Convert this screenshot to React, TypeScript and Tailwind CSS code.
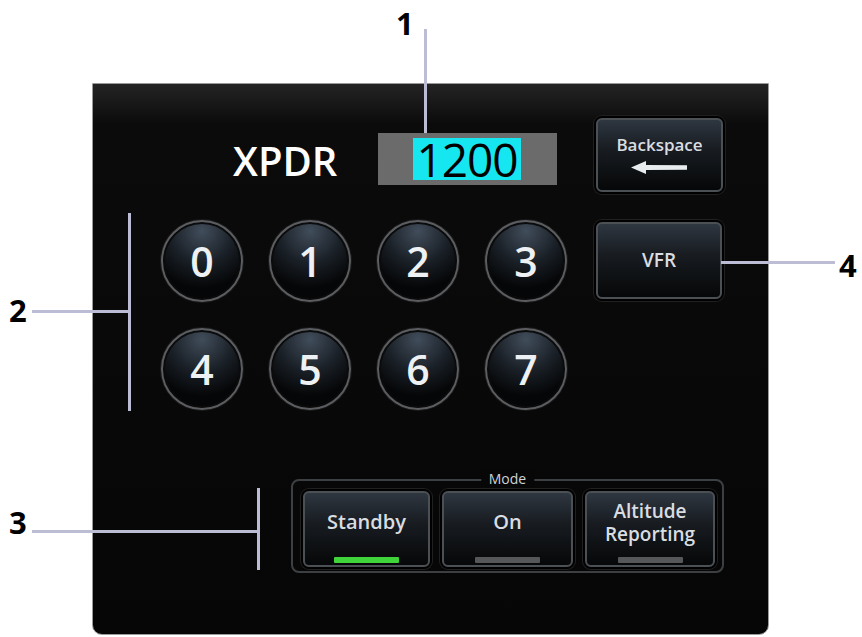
import React from "react";

const font = { fontFamily: '"Open Sans", "Noto Sans", sans-serif' };

function Key({ d }: { d: string }) {
  return (
    <div className="flex h-[82px] w-[82px] items-center justify-center rounded-full border-2 border-[#5b5d60] bg-[radial-gradient(circle_at_50%_12%,#414d5b_0%,#1a2027_40%,#050607_72%)] shadow-[inset_0_0_0_2px_#0b0b0b,0_0_0_1px_#1a1a1a]">
      <span className="text-[41px] font-semibold leading-none text-[#eef1f3]">{d}</span>
    </div>
  );
}

const btn =
  "flex flex-col items-center rounded-[6px] border-2 border-[#4b5055] bg-[linear-gradient(to_bottom,#2e3640_0%,#181c21_42%,#060708_100%)] shadow-[0_0_0_2px_#000,0_0_0_3px_#202020] text-[#d9dde1]";

export default function App() {
  return (
    <div className="relative h-[637px] w-[862px] overflow-hidden bg-white pl-[92px] pt-[83px]" style={font}>
      {/* panel */}
      <div className="flex h-[552px] w-[677px] flex-col rounded-b-[10px] border border-[#9a9a9a] bg-[linear-gradient(to_bottom,#242424_0px,#0b0b0b_40px,#060606_100%)]">
        {/* top row */}
        <div className="mt-[34px] flex h-[74px] items-start">
          <div className="ml-[140px] mt-[15px] flex h-[52px] w-[145px] items-center pt-[4px]">
            <span className="text-[40px] font-semibold leading-none text-white">XPDR</span>
          </div>
          <div className="mt-[15px] flex h-[52px] w-[179px] items-center bg-[#6b6b6b] pl-[35px]">
            <div className="flex h-[42px] w-[108px] items-center justify-center bg-[#16e6f0]">
              <span className="text-[46px] font-medium leading-none tracking-[-1px] text-black">1200</span>
            </div>
          </div>
          <div className={`${btn} ml-[39px] h-[74px] w-[127px] pt-[16px]`}>
            <span className="text-[17px] font-semibold leading-none">Backspace</span>
            <svg className="mt-[8px]" width="58" height="13" viewBox="0 0 58 13">
              <polygon points="0,6.5 15,0 15,4 56,4.3 56,8.7 15,9 15,13" fill="#e8ecef" />
            </svg>
          </div>
        </div>

        {/* keypad row */}
        <div className="mt-[28px] flex items-start">
          <div className="ml-[68px] grid grid-cols-4 gap-[26px]">
            {["0", "1", "2", "3", "4", "5", "6", "7"].map((d) => (
              <Key key={d} d={d} />
            ))}
          </div>
          <div className={`${btn} ml-[29px] mt-[2px] h-[77px] w-[126px] justify-center`}>
            <span className="text-[19px] font-semibold leading-none">VFR</span>
          </div>
        </div>

        {/* mode group */}
        <div className="relative ml-[198px] mt-[69px] flex h-[94px] w-[433px] gap-[12px] rounded-[8px] border-2 border-[#3d4043] pl-[10px] pt-[10px]">
          <span className="absolute left-1/2 top-[-11px] -translate-x-1/2 bg-[#070707] px-[8px] text-[14px] leading-[18px] text-[#cfd3d6]">
            Mode
          </span>
          <div className={`${btn} h-[76px] w-[127px]`}>
            <div className="flex h-[58px] items-center">
              <span className="text-[20px] font-semibold leading-none">Standby</span>
            </div>
            <div className="mt-[6px] h-[6px] w-[65px] rounded-[1px] bg-[#3fd43a]" />
          </div>
          <div className={`${btn} h-[76px] w-[131px]`}>
            <div className="flex h-[58px] items-center">
              <span className="text-[20px] font-semibold leading-none">On</span>
            </div>
            <div className="mt-[6px] h-[6px] w-[65px] rounded-[1px] bg-[#555759]" />
          </div>
          <div className={`${btn} h-[76px] w-[130px]`}>
            <div className="flex h-[58px] items-center justify-center pt-[2px]">
              <span className="text-center text-[19px] font-semibold leading-[23px]">
                Altitude
                <br />
                Reporting
              </span>
            </div>
            <div className="mt-[6px] h-[6px] w-[65px] rounded-[1px] bg-[#555759]" />
          </div>
        </div>
      </div>

      {/* callouts */}
      <span className="absolute left-[396px] top-[8px] text-[31px] font-bold leading-none text-black">1</span>
      <div className="absolute left-[424px] top-[29px] h-[104px] w-[3px] bg-[#bcbcd4]" />

      <span className="absolute left-[9px] top-[295px] text-[31px] font-bold leading-none text-black">2</span>
      <div className="absolute left-[32px] top-[310px] h-[3px] w-[98px] bg-[#bcbcd4]" />
      <div className="absolute left-[128px] top-[213px] h-[198px] w-[3px] bg-[#bcbcd4]" />

      <span className="absolute left-[9px] top-[507px] text-[31px] font-bold leading-none text-black">3</span>
      <div className="absolute left-[32px] top-[530px] h-[3px] w-[226px] bg-[#bcbcd4]" />
      <div className="absolute left-[257px] top-[488px] h-[82px] w-[3px] bg-[#bcbcd4]" />

      <span className="absolute left-[839px] top-[250px] text-[31px] font-bold leading-none text-black">4</span>
      <div className="absolute left-[721px] top-[261px] h-[3px] w-[114px] bg-[#bcbcd4]" />
    </div>
  );
}
